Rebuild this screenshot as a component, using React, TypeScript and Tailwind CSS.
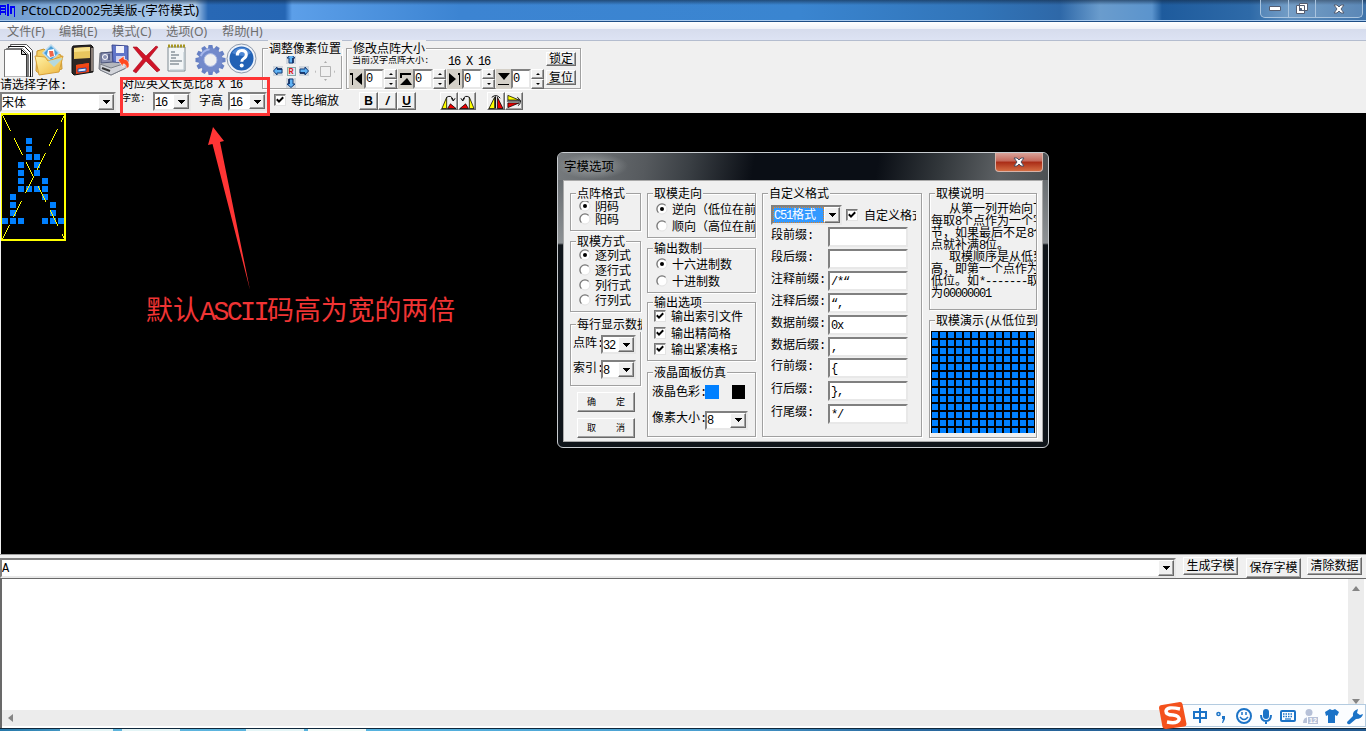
import React from "react";

/** Splits a string so that Latin runs get half-width cells and CJK runs full-width ones. */
function T({ s, className = "" }: { s: string; className?: string }) {
  const parts = s.split(/([\x20-\x7e“”]+)/).filter(Boolean);
  return (
    <span className={"whitespace-pre " + className}>
      {parts.map((p, i) =>
        /^[\x20-\x7e“”]/.test(p) ? (
          <span key={i} className="font-['Liberation_Mono','Noto_Sans_CJK_SC',monospace] tracking-[-0.1em]">{p}</span>
        ) : (
          <span key={i}>{p}</span>
        )
      )}
    </span>
  );
}

function Group({ title, className, children }: { title: string; className: string; children?: React.ReactNode }) {
  return (
    <div className={"relative shrink-0 border border-[#a0a0a0] shadow-[1px_1px_0_#fff,inset_1px_1px_0_#fff] " + className}>
      <div className="absolute left-[5px] right-[-2px] top-[-9px] flex h-[16px] overflow-hidden leading-[16px]">
        <T s={title} className="bg-[#f0f0f0] px-px" />
      </div>
      {children}
    </div>
  );
}

function Arrow() {
  return (
    <svg width="7" height="4" viewBox="0 0 7 4" shapeRendering="crispEdges">
      <path d="M0 0h7v1H6v1H5v1H4v1H3V3H2V2H1V1H0z" fill="#000" />
    </svg>
  );
}

const sunken = "border-2 border-t-[#808080] border-l-[#808080] border-b-[#e8e8e8] border-r-[#e8e8e8] bg-white";
const raised =
  "border border-t-white border-l-white border-b-[#696969] border-r-[#696969] shadow-[inset_-1px_-1px_0_#a0a0a0] bg-[#f0f0f0]";

function Combo({ value, className, selected }: { value: string; className: string; selected?: boolean }) {
  return (
    <div className={"flex shrink-0 items-stretch " + sunken + " " + className}>
      <div className="flex min-w-0 flex-1 items-center overflow-hidden">
        {selected ? (
          <span className="flex h-[16px] w-full items-center border border-dotted border-[#e08020] bg-[#3399ff] text-white">
            <T s={value} />
          </span>
        ) : (
          <T s={value} />
        )}
      </div>
      <div className={"flex w-[16px] shrink-0 items-center justify-center " + raised}>
        <Arrow />
      </div>
    </div>
  );
}

function Radio({ label, on, className = "" }: { label: string; on?: boolean; className?: string }) {
  return (
    <div className={"flex shrink-0 items-center overflow-hidden " + className}>
      <svg width="12" height="12" viewBox="0 0 12 12" className="shrink-0">
        <circle cx="6" cy="6" r="5" fill="#fff" stroke="#e3e3e3" />
        <path d="M2.4 9.6A5 5 0 0 1 9.6 2.4" fill="none" stroke="#777" strokeWidth="1.3" />
        {on && <circle cx="6" cy="6" r="2" fill="#000" />}
      </svg>
      <T s={label} className="ml-[4px]" />
    </div>
  );
}

function Check({ label, className = "", gap = "ml-[5px]" }: { label: string; className?: string; gap?: string }) {
  return (
    <div className={"flex shrink-0 items-center overflow-hidden " + className}>
      <div className="flex h-[12px] w-[12px] shrink-0 items-center justify-center border border-b-[#e3e3e3] border-l-[#777] border-r-[#e3e3e3] border-t-[#777] bg-white shadow-[inset_1px_1px_0_#999]">
        <svg width="8" height="8" viewBox="0 0 8 8">
          <path d="M.8 3.3L3 5.6 7.2 1.3" fill="none" stroke="#000" strokeWidth="2" />
        </svg>
      </div>
      <T s={label} className={gap} />
    </div>
  );
}

function Spin() {
  return (
    <div className="flex w-[13px] flex-col">
      <div className={"flex h-[10px] items-center justify-center " + raised}>
        <svg width="4" height="2" viewBox="0 0 4 2"><path d="M0 2L2 0l2 2z" /></svg>
      </div>
      <div className={"flex h-[10px] items-center justify-center " + raised}>
        <svg width="4" height="2" viewBox="0 0 4 2"><path d="M0 0l2 2 2-2z" /></svg>
      </div>
    </div>
  );
}

function Spinner({ icon, className = "" }: { icon: string; className?: string }) {
  return (
    <div className={"flex h-[20px] shrink-0 " + className}>
      <div className="flex w-[15px] items-center justify-center bg-[#d4d0c8]">
        <svg width="15" height="18" viewBox="0 0 15 18"><path d={icon} fill="#000" /></svg>
      </div>
      <div className={"flex w-[20px] items-center " + sunken}><T s="0" className="mt-[-2px]" /></div>
      <Spin />
    </div>
  );
}

function Btn({ label, className }: { label: string; className: string }) {
  return (
    <div className={"flex shrink-0 items-center justify-center " + raised + " " + className}>
      <T s={label} className="mt-[-2px]" />
    </div>
  );
}

/* ---------- toolbar icons ---------- */
function IconNew() {
  return (
    <svg width="31" height="34" viewBox="0 0 31 34">
      <path d="M6.500 1.500h16l6 6V34h-16z" fill="#fff" stroke="#555" />
      <path d="M4.500 3.500h16l6 6V34h-16z" fill="#fff" stroke="#111" />
      <path d="M2.500 5.500h16l6 6V34h-16z" fill="#fff" stroke="#777" />
      <path d="M.5 6.500h17l5 5V34H.5z" fill="#fff" stroke="#777" />
      <path d="M17.500 6.500v5h5z" fill="#ccc" stroke="#000" />
      <path d="M23 11v23M26.500 10v24" stroke="#000" />
    </svg>
  );
}
function IconOpen() {
  return (
    <svg width="31" height="32" viewBox="0 0 31 32">
      <defs><linearGradient id="fo" x2="1" y2="1"><stop stopColor="#fff3a8" /><stop offset="1" stopColor="#eeb53c" /></linearGradient></defs>
      <path d="M3 7l7-2 3 3 14 3 1 14-22 5-4-3z" fill="#f5cf62" stroke="#c9942c" />
      <path d="M17 1l8 8-8 8-8-8z" fill="#4a9fd8" stroke="#b9d9ee" strokeWidth="1.500" />
      <path d="M14 6l6-1 1 7-5 2-3-3z" fill="#fff" /><path d="M15 7l4 0 1 5-4 1z" fill="#ef654b" />
      <path d="M1 12l10 1 3 4 15-5-4 16-20 3z" fill="url(#fo)" stroke="#d7a039" />
      <path d="M14 17l15-3-9 9z" fill="#b4d9df" />
    </svg>
  );
}
function IconFloppy() {
  return (
    <svg width="25" height="32" viewBox="0 0 25 32">
      <path d="M3 2l18-1 2 2v25l-19 3-2-2V4z" fill="#2d2725" stroke="#111" />
      <path d="M4 4l16-1v11L4 15z" fill="#e8c65f" /><path d="M4 4l16-1v4L4 8z" fill="#f7e08a" />
      <path d="M6 21l13-2v9L6 30z" fill="#ed3f19" /><path d="M6 21l13-2v3L6 24z" fill="#f24a16" />
      <path d="M8 25l8-1v3l-8 1z" fill="#dce9ff" stroke="#234fa0" /><path d="M22 4v23" stroke="#8a7f78" strokeWidth="2" />
    </svg>
  );
}
function IconSaveAll() {
  return (
    <svg width="32" height="32" viewBox="0 0 32 32">
      <path d="M2 9l14-1 13 3-1 13-15 7L1 25z" fill="#b4b7bd" stroke="#71767f" />
      <path d="M3 9l12-1v10L3 19z" fill="#8c93b4" stroke="#4b5478" /><circle cx="7" cy="13" r="2.500" fill="none" stroke="#fff" /><path d="M11 10v6" stroke="#26315e" />
      <path d="M14 1l16 1v17l-15-1z" fill="#6075c9" stroke="#3b488f" /><path d="M18 2h8v7h-8z" fill="#f2f2fa" /><path d="M18 12h9v6h-9z" fill="#c8cff2" />
      <path d="M2 20l11 4 15-5v5l-15 7L2 26z" fill="#d2d4da" stroke="#787d86" /><path d="M4 24l8 3" stroke="#333" strokeWidth="2" />
      <path d="M20 16l6-4v3q6 1 5 8l-3 2q1-5-3-5v3z" fill="#ff481e" stroke="#fff" strokeWidth=".6" />
    </svg>
  );
}
function IconDelete() {
  return (
    <svg width="29" height="29" viewBox="0 0 29 29">
      <path d="M1 2l4 0 9 9L24 1l2 1-9 11 11 12-3 2-11-11L4 28l-3-2 10-12z" fill="#cf1428" stroke="#a50d1d" strokeWidth=".6" />
    </svg>
  );
}
function IconNote() {
  return (
    <svg width="21" height="29" viewBox="0 0 21 29">
      <path d="M2 3h17v24H2z" fill="#f3f6f7" stroke="#7e8a92" />
      <path d="M2 2h17" stroke="#a69520" strokeWidth="3" strokeDasharray="2 1" />
      <path d="M5 8h4M5 11h8M5 14h5M4 17h12M4 20h9" stroke="#566571" strokeWidth="1.200" />
      <path d="M18 8v18H4" stroke="#b9c7ce" fill="none" />
    </svg>
  );
}
const teeth = [0, 30, 60, 90, 120, 150, 180, 210, 240, 270, 300, 330];
function IconGear() {
  return (
    <svg width="31" height="32" viewBox="-16 -16 32 32">
      <g fill="#6680c4">{teeth.map((a) => <path key={a} d="M-3-10l1-5.500h4l1 5.500z" transform={`rotate(${a})`} />)}</g>
      <circle r="9.500" fill="none" stroke="#738acb" strokeWidth="6" /><circle r="6.600" fill="#f0f0f0" stroke="#a8b7e2" />
      <path d="M-10-4a11 11 0 0 1 9-7" fill="none" stroke="#a6b7ec" strokeWidth="2" />
    </svg>
  );
}
function IconHelp() {
  return (
    <svg width="31" height="31" viewBox="0 0 31 31">
      <circle cx="15.500" cy="15.500" r="14.500" fill="#eef3fb" stroke="#8d98a9" /><circle cx="15.500" cy="15.500" r="12" fill="#2161b5" />
      <path d="M6 10a11 11 0 0 1 19 0q-7 6-19 0" fill="#4d87d4" />
      <path d="M11.300 12.500q0-5 4.500-5 4.500 0 4.500 4 0 2.500-2.500 4-2 1.200-2 3.200" fill="none" stroke="#fff" strokeWidth="3" /><circle cx="15.700" cy="22.500" r="2" fill="#fff" />
    </svg>
  );
}

function MoveArrow({ r, className = "" }: { r: number; className?: string }) {
  return (
    <svg width="10" height="10" viewBox="0 0 10 10" className={"bg-[#d0d6dd] " + className}>
      <g transform={`rotate(${r} 5 5)`}><path d="M5 .5L9 4H7v5H3V4H1z" fill="#5fb2f4" stroke="#173e78" /><path d="M7 4v5" stroke="#0b265b" strokeWidth="1.500" /></g>
    </svg>
  );
}

/* ---------- canvas glyph ---------- */
const rows: number[][] = [[], [], [], [3], [3], [3, 4], [2, 4], [2, 4], [2, 5], [2, 3, 4, 5], [1, 5], [1, 6], [1, 6], [0, 1, 2, 5, 6, 7]];

function Glyph() {
  return (
    <svg width="66" height="130" viewBox="0 0 66 130" shapeRendering="crispEdges">
      {rows.flatMap((cols, r) => cols.map((c) => <rect key={`${r}-${c}`} x={1 + c * 8} y={1 + r * 8} width="6" height="6" fill="#0080ff" />))}
      <rect x="0" y="1" width="64" height="126" fill="none" stroke="#ff0" strokeWidth="2" />
      <path d="M1 1L64 127" stroke="#ff0" strokeDasharray="18.6 8.2" />
      <path d="M1 127L64 1" stroke="#ff0" strokeDasharray="18.6 8.2" strokeDashoffset="1.500" />
    </svg>
  );
}

const fields: [string, string, string][] = [
  ["段前缀:", "", "mt-0"],
  ["段后缀:", "", "mt-[2px]"],
  ["注释前缀:", "/*“", "mt-[2px]"],
  ["注释后缀:", "“,", "mt-[2px]"],
  ["数据前缀:", "0x", "mt-[2px]"],
  ["数据后缀:", ",", "mt-[2px]"],
  ["行前缀:", "{", "mt-px"],
  ["行后缀:", "},", "mt-[3px]"],
  ["行尾缀:", "*/", "mt-[3px]"],
];

const notes = [
  "   从第一列开始向下",
  "每取8个点作为一个字",
  "节，如果最后不足8个",
  "点就补满8位。",
  "   取模顺序是从低到",
  "高，即第一个点作为",
  "低位。如*-------取",
  "为00000001",
];

function OptionsDialog() {
  return (
    <div className="absolute left-[557px] top-[152px] flex h-[296px] w-[492px] flex-col rounded-[6px] border border-[#c8ccd0] bg-[linear-gradient(#5b6064_0,#8d9194_90px,#10151a_92px,#10151a_100%)]">
      <div className="flex h-[27px] shrink-0 justify-between rounded-t-[5px] bg-[linear-gradient(100deg,#777b7e_0%,#565a5e_18%,#3a3f44_27%,#0a0e15_40%,#0a0e15_65%,#33383c_78%,#5d6164_90%,#4c5053_100%)]">
        <div className="flex h-[26px] w-[70px] items-center bg-[radial-gradient(closest-side,rgba(190,195,195,0.65),transparent)] pl-[6px] font-['Noto_Sans_CJK_SC',sans-serif] text-[12.5px]">
          字模选项
        </div>
        <div className="mr-[5px] flex h-[19px] w-[48px] items-center justify-center rounded-b-[4px] border border-t-0 border-[#d8b3a8] bg-[linear-gradient(#d8a299_0,#c4685a_45%,#a92b16_50%,#d36c42_100%)]">
          <svg width="12" height="10" viewBox="0 0 12 10"><path d="M1 1h3l2 2 2-2h3L8 5l3 4H8L6 7 4 9H1l3-4z" fill="#fff" stroke="#4a4f62" /></svg>
        </div>
      </div>
      <div className="mx-[5px] flex h-[262px] shrink-0 overflow-hidden border border-[#aaa] bg-[#f0f0f0]">
        {/* matrix column */}
        <div className="ml-[6px] flex w-[71px] shrink-0 flex-col pt-[12px]">
          <Group title="点阵格式" className="h-[38px] pl-[8px] pt-[5px]">
            <Radio label="阴码" on className="h-[13px]" />
            <Radio label="阳码" className="h-[14px]" />
          </Group>
          <Group title="取模方式" className="mt-[10px] h-[71px] pl-[8px] pt-[5px]">
            <Radio label="逐列式" on className="h-[15px]" />
            <Radio label="逐行式" className="h-[15px]" />
            <Radio label="列行式" className="h-[15px]" />
            <Radio label="行列式" className="h-[15px]" />
          </Group>
          <Group title="每行显示数据" className="mt-[12px] h-[62px] pl-[2px] pt-[10px]">
            <div className="flex h-[19px] items-center"><T s="点阵:" className="mt-[-3px] w-[28px]" /><Combo value="32" className="h-[19px] w-[35px]" /></div>
            <div className="mt-[6px] flex h-[19px] items-center"><T s="索引:" className="mt-[-3px] w-[28px]" /><Combo value="8" className="h-[19px] w-[35px]" /></div>
          </Group>
          <div className={"ml-[7px] mt-[6px] flex h-[20px] w-[58px] items-center justify-between px-[9px] text-[9px] " + raised}><span>确</span><span>定</span></div>
          <div className={"ml-[7px] mt-[6px] flex h-[20px] w-[58px] items-center justify-between px-[9px] text-[9px] " + raised}><span>取</span><span>消</span></div>
        </div>
        {/* output column */}
        <div className="ml-[6px] flex w-[109px] shrink-0 flex-col pt-[12px]">
          <Group title="取模走向" className="h-[45px] pl-[8px] pt-[6px]">
            <Radio label="逆向（低位在前）" on className="h-[17px]" />
            <Radio label="顺向（高位在前）" className="h-[17px]" />
          </Group>
          <Group title="输出数制" className="mt-[10px] h-[45px] pl-[8px] pt-[6px]">
            <Radio label="十六进制数" on className="h-[17px]" />
            <Radio label="十进制数" className="h-[17px]" />
          </Group>
          <Group title="输出选项" className="mt-[9px] h-[59px] pl-[6px] pt-[5px]">
            <Check label="输出索引文件" className="h-[16px]" />
            <Check label="输出精简格" className="h-[17px]" />
            <Check label="输出紧凑格式" className="h-[16px] w-[83px]" />
          </Group>
          <Group title="液晶面板仿真" className="mt-[11px] h-[65px] pl-[4px] pt-[11px]">
            <div className="flex h-[15px] items-center">
              <T s="液晶色彩:" className="w-[53px]" /><div className="h-[14px] w-[14px] bg-[#0080ff]" /><div className="ml-[13px] h-[14px] w-[13px] bg-black" />
            </div>
            <div className="mt-[11px] flex h-[20px] items-center"><T s="像素大小:" className="mt-[-5px] w-[53px]" /><Combo value="8" className="h-[19px] w-[43px]" /></div>
          </Group>
        </div>
        {/* custom format column */}
        <div className="ml-[6px] flex w-[160px] shrink-0 flex-col pt-[12px]">
          <Group title="自定义格式" className="h-[244px] pl-[8px] pt-[11px]">
            <div className="flex h-[20px] items-center">
              <Combo value="C51格式" selected className="h-[20px] w-[71px]" />
              <Check label="自定义格式" gap="ml-[6px]" className="ml-[4px] h-[16px] w-[70px]" />
            </div>
            <div className="mt-[2px] flex flex-col">
              {fields.map(([label, value, gap]) => (
                <div key={label} className={"flex h-[20px] items-center " + gap}>
                  <T s={label} className="mt-[-5px] w-[57px] pl-0" />
                  <div className={"flex h-[20px] w-[80px] items-center " + sunken}><T s={value} className="pl-px" /></div>
                </div>
              ))}
            </div>
          </Group>
        </div>
        {/* description column */}
        <div className="ml-[7px] flex w-[108px] shrink-0 flex-col pt-[12px]">
          <Group title="取模说明" className="h-[117px] pt-[8px]">
            <div className="flex flex-col overflow-hidden pl-px">
              {notes.map((n) => <T key={n} s={n} className="h-[12px] leading-[12px]" />)}
            </div>
          </Group>
          <Group title="取模演示(从低位到高)" className="mt-[10px] h-[118px] pl-px pt-[10px]">
            <svg width="104" height="102" viewBox="0 0 104 102" shapeRendering="crispEdges">
              <defs><pattern id="px" width="8" height="8" patternUnits="userSpaceOnUse"><path d="M0 0h8v8H0z" /><path d="M1 1h6v6H1z" fill="#0080ff" /></pattern></defs>
              <path d="M0 0h104v102H0z" fill="url(#px)" />
            </svg>
          </Group>
        </div>
      </div>
    </div>
  );
}

function ImeBar() {
  return (
    <div className="absolute left-[1158px] top-[701px] flex h-[29px] w-[208px] items-center">
      <div className="absolute inset-y-[3px] left-[14px] right-0 border border-[#b3cbe0] bg-[#fbfdff]" />
      <svg width="208" height="29" viewBox="0 0 208 29" className="relative">
        <path d="M4 4l18-3q2 0 2.500 2l4 20q0 2-2 2.500L8 28q-3 0-3.500-2L1 7q0-3 3-3z" fill="#f4511c" />
        <path d="M22 8q-13-3-14 2 0 4 7 4 7 1 6 5-2 4-12 2" fill="none" stroke="#fff" strokeWidth="3.500" />
        <g fill="none" stroke="#1b73c7" strokeWidth="2">
          <path d="M36 11h12v6H36zM42 7v15" />
          <circle cx="60.500" cy="13" r="1.600" strokeWidth="1.500" />
          <circle cx="86" cy="15" r="7" /><path d="M82 16q4 5 8 0" strokeWidth="1.500" /><path d="M84 11v3M88 11v3" strokeWidth="1.500" />
          <path d="M103 14q0 6 5 6t5-6M108 19v4" />
          <rect x="123" y="10" width="14" height="10" rx="1" />
          <path d="M125 13h10M125 15.500h10" strokeWidth="1.500" strokeDasharray="1.500 1" /><path d="M127 18h6" strokeWidth="1.200" />
        </g>
        <path d="M64 15h3v3l-2 4h-1l1-4h-1z" fill="#1b73c7" /><rect x="105" y="8" width="6" height="10" rx="3" fill="#1b73c7" />
        <circle cx="151" cy="11.500" r="3.500" fill="#b6c1d8" /><path d="M145 22q0-6 6-6h3v6z" fill="#b6c1d8" />
        <path d="M149.500 15.500h11v8h-11z" fill="#b6c1d8" stroke="#fbfdff" />
        <text x="151" y="22" fontSize="7" fontWeight="700" fill="#fff" fontFamily="Liberation Sans, sans-serif">12</text>
        <path d="M167 11l5-3q2 2 5 0l4 3-2 4-2-1v8h-7v-8l-2 1z" fill="#1b73c7" />
        <path d="M189 21l6-6q-1-5 5-7l-1 4 3 2 3-1q-1 5-7 5l-6 5q-3 1-3-2z" fill="#1b73c7" />
      </svg>
    </div>
  );
}

const tri: [string, string, string][] = [
  ["M1 16h5V4z", "M7 16h9l-6-5z", "M6 4q5-3 7 3M11 5l2 3 2-3"],
  ["M16 16h-5V4z", "M10 16H1l6-5z", "M11 4q-5-3-7 3M2 5l2 3 2-3"],
  ["M1 16h6V4z", "M10 16h6L10 4z", "M4 4q5-4 9 1M8 3v13"],
  ["M2 2v5h12z", "M2 15v-5h12z", "M12 4q6 4 1 9M1 8h15"],
];

export default function App() {
  return (
    <div className="relative flex h-[731px] w-[1366px] flex-col overflow-hidden bg-[#f0f0f0] font-['Noto_Sans_CJK_SC',sans-serif] text-[12px] leading-[14px] text-black">
      {/* title bar */}
      <div className="flex h-[22px] shrink-0 justify-between border-b border-[#1d4d85] bg-[linear-gradient(rgba(20,45,75,0.65)_0,transparent_5px),linear-gradient(90deg,#6e9bd0_0,#8fb5de_100px,#b4d0ee_195px,#2868b5_208px,#2566b4_285px,#5c9fe9_292px,#3c84d2_460px,#3a85d0_800px,#3174b8_980px,#2e68a8_1060px,#6a9ccd_1100px,#5b94cd_1152px,#1e5b9d_1162px,#2e6aa8_1250px,#5c8dbd_1290px,#3f73aa_1366px)] shadow-[inset_0_-1px_0_#a7c9ed]">
        <div className="flex items-center">
          <svg width="16" height="14" viewBox="0 0 16 14" shapeRendering="crispEdges"><path d="M0 1h6v10H5V9H1v2H0zM1 3v1h4V3zM1 6v1h4V6zM7 0h2v12H7zM10 2h5v11h-1V4h-2v6h-2z" fill="#0000f5" /></svg>
          <span className="ml-[5px] w-[186px] whitespace-nowrap font-['Noto_Sans','Noto_Sans_CJK_SC',sans-serif] text-[12.500px] tracking-[-0.03px]">PCtoLCD2002完美版-(字符模式)</span>
        </div>
        <div className="mr-[3px] flex h-[18px] w-[103px] rounded-b-[5px] border border-t-0 border-[#a9c4df] bg-[#ffffff25]">
          <div className="flex w-[28px] items-center justify-center border-r border-[#a9c4df]">
            <svg width="12" height="5" viewBox="0 0 12 5"><path d="M.5.5h11v4H.5z" fill="#fff" stroke="#555d70" /></svg>
          </div>
          <div className="flex w-[27px] items-center justify-center border-r border-[#a9c4df]">
            <svg width="12" height="11" viewBox="0 0 12 11"><path d="M3.500.5h8v7h-8zM.5 2.500h8v8h-8z" fill="#fff" stroke="#555d70" /><path d="M3.500 5.500h2v2h-2z" fill="#3569a0" stroke="#555d70" /></svg>
          </div>
          <div className="flex flex-1 items-center justify-center">
            <svg width="12" height="10" viewBox="0 0 12 10"><path d="M1 1h3l2 2 2-2h3L8 5l3 4H8L6 7 4 9H1l3-4z" fill="#fff" stroke="#555d70" /></svg>
          </div>
        </div>
      </div>
      {/* menu bar */}
      <div className="flex h-[19px] shrink-0 items-center border-b border-[#b4bdcf] bg-[linear-gradient(#fff_0,#eef1f7_7px,#d6dced_7px,#dde3f3_100%)] pl-[7px] pt-px font-['Noto_Sans','Noto_Sans_CJK_SC',sans-serif] text-[12.200px] text-[#6d6d6d]">
        <span className="w-[52px]">文件(F)</span>
        <span className="w-[53px]">编辑(E)</span>
        <span className="w-[54px]">模式(C)</span>
        <span className="w-[56px]">选项(O)</span>
        <span>帮助(H)</span>
      </div>
      {/* toolbar */}
      <div className="flex h-[72px] shrink-0">
        <div className="flex w-[262px] shrink-0 flex-col">
          <div className="flex h-[35px] items-center pl-[4px] pt-[2px]">
            <IconNew />
            <div className="ml-[-1px]"><IconOpen /></div>
            <div className="ml-[5px]"><IconFloppy /></div>
            <div className="ml-[3px]"><IconSaveAll /></div>
            <div className="ml-[2px]"><IconDelete /></div>
            <div className="mb-[3px] ml-[5px]"><IconNote /></div>
            <div className="ml-[8px]"><IconGear /></div>
            <div className="mb-[3px]"><IconHelp /></div>
          </div>
          <div className="flex h-[37px] w-[270px]">
            <div className="flex w-[116px] flex-col">
              <div className="flex h-[16px] items-center pt-[2px]"><T s="请选择字体:" /></div>
              <Combo value="宋体" className="h-[20px] w-[116px]" />
            </div>
            <div className="ml-[6px] flex w-[148px] flex-col">
              <div className="flex h-[13px] items-center overflow-hidden pt-[3px]"><T s="对应英文长宽比8 X 16" /></div>
              <div className="mt-[3px] flex h-[19px] items-center">
                <T s="字宽:" className="mt-[-6px] w-[31px] text-[9px]" />
                <Combo value="16" className="h-[19px] w-[38px]" />
                <T s="字高" className="ml-[8px] mt-[-3px] w-[29px]" />
                <Combo value="16" className="h-[19px] w-[39px]" />
              </div>
            </div>
          </div>
        </div>
        <div className="flex w-[80px] shrink-0 flex-col pt-[7px]">
          <Group title="调整像素位置" className="h-[41px] pl-[10px] pt-[5px]">
            <div className="flex items-center">
              <div className="grid w-[36px] grid-cols-3 grid-rows-3 items-center justify-items-center gap-x-[3px] gap-y-[2px]">
                <span /><MoveArrow r={0} /><span />
                <MoveArrow r={270} />
                <span className="flex h-[9px] w-[9px] items-center justify-center border border-[#8aa] bg-[#dce9f3] text-[8px] font-bold leading-none text-[#d22]">R</span>
                <MoveArrow r={90} />
                <span /><MoveArrow r={180} /><span />
              </div>
              <svg width="20" height="20" viewBox="0 0 20 20" className="ml-[6px]"><path d="M5.500 5.500h10v10h-10z" fill="none" stroke="#b5b5b5" /><path d="M9 2l1.500-2L12 2zM9 18l1.500 2 1.500-2zM1 9v3l-1-1zM19 9v3l1-1z" fill="#aaa" /></svg>
            </div>
          </Group>
          <Check label="等比缩放" className="ml-[12px] mt-[2px] h-[17px]" gap="ml-[5px]" />
        </div>
        <div className="ml-[4px] flex w-[235px] shrink-0 flex-col pt-[7px]">
          <Group title="修改点阵大小" className="flex h-[41px]">
            <div className="flex w-[199px] flex-col">
              <div className="flex h-[16px] items-center pl-[5px] pt-[7px]">
                <T s="当前汉字点阵大小:" className="w-[96px] text-[9px]" /><T s="16 X 16" />
              </div>
              <div className="mt-[4px] flex gap-x-[1px] pl-[2px]">
                <Spinner icon="M1 3h3v12H3V5H1zM13 3v12L6 9z" />
                <Spinner icon="M2 3h11v2H4v3H2zM2 15h12L9 8z" />
                <Spinner icon="M2 3v12l7-6zM11 3h2v12h-1V5h-1z" />
                <Spinner icon="M2 3h12L8 10zM2 14h11v1H2z" />
              </div>
            </div>
            <div className="flex flex-col pt-[3px]">
              <Btn label="锁定" className="h-[14px] w-[30px]" />
              <Btn label="复位" className="mt-[4px] h-[15px] w-[30px]" />
            </div>
          </Group>
          <div className="mt-[3px] flex pl-[13px] font-['Liberation_Sans',sans-serif] text-[12px] font-bold">
            <div className={"flex h-[18px] w-[19px] items-center justify-center " + raised}>B</div>
            <div className={"flex h-[18px] w-[19px] items-center justify-center italic " + raised}>/</div>
            <div className={"flex h-[18px] w-[19px] items-center justify-center underline " + raised}>U</div>
            <div className="ml-[24px] flex">
              {tri.map(([a, b, c], i) => (
                <div key={i} className={"flex h-[18px] w-[18px] items-center justify-center " + raised + (i === 2 ? " ml-[11px]" : "")}>
                  <svg width="17" height="17" viewBox="0 0 17 17"><path d={a} fill="#ff0" stroke="#000" strokeWidth=".8" /><path d={b} fill="#e00" stroke="#000" strokeWidth=".8" /><path d={c} fill="none" stroke="#000" /></svg>
                </div>
              ))}
            </div>
          </div>
        </div>
      </div>
      {/* drawing canvas */}
      <div className="ml-px h-[441px] shrink-0 bg-black"><Glyph /></div>
      {/* input row */}
      <div className="flex h-[24px] shrink-0 border-t border-[#a0a0a0] pt-[3px]">
        <Combo value="A" className="h-[20px] w-[1176px]" />
        <Btn label="生成字模" className="ml-[7px] mt-[-1px] h-[18px] w-[55px]" />
        <Btn label="保存字模" className="ml-[8px] h-[20px] w-[55px]" />
        <Btn label="清除数据" className="ml-[6px] mt-[-1px] h-[18px] w-[55px]" />
      </div>
      {/* output area */}
      <div className="flex h-[150px] shrink-0 flex-col border-l-2 border-t border-[#696969] bg-white">
        <div className="flex h-[131px] shrink-0 justify-end pr-[2px]">
          <div className="flex w-[16px] flex-col items-center justify-between bg-[#ececec] pb-[6px] pt-[7px]">
            <svg width="8" height="5" viewBox="0 0 8 5"><path d="M0 5l4-5 4 5z" fill="#858585" /></svg>
            <svg width="8" height="5" viewBox="0 0 8 5"><path d="M0 0l4 5 4-5z" fill="#858585" /></svg>
          </div>
        </div>
        <div className="flex h-[16px] items-center bg-[#ececec] pl-[6px]">
          <svg width="5" height="8" viewBox="0 0 5 8"><path d="M5 0L0 4l5 4z" fill="#858585" /></svg>
        </div>
      </div>
      {/* task bar edge */}
      <div className="flex h-[3px] shrink-0 border-t border-[#10283c] bg-[linear-gradient(90deg,#2577a8_0,#5fb6de_120px,#55b2df_400px,#4a9fd0_700px,#2a6aa0_900px,#235a90_1366px)]">
        <div className="ml-[60px] h-[2px] w-[53px] bg-[#e4f5f6]" />
        <div className="ml-[9px] h-[2px] w-[58px] bg-[#e4f5f6]" />
        <div className="ml-[66px] h-[2px] w-[58px] bg-[#e4f5f6]" />
        <div className="ml-[4px] h-[2px] w-[58px] bg-[#f2fbf8]" />
      </div>

      <OptionsDialog />

      {/* annotation */}
      <div className="absolute left-[120px] top-[77px] h-[39px] w-[150px] border-[3px] border-[#ff3535]" />
      <svg width="50" height="170" viewBox="0 0 50 170" className="absolute left-[205px] top-[125px]"><path d="M8 2l11 14-4 1L45 165 7.500 19 3 20z" fill="#ff3535" /></svg>
      <div className="absolute left-[146px] top-[291px] text-[26.900px] leading-[36px] text-[#f03434]"><T s="默认ASCII码高为宽的两倍" /></div>

      <ImeBar />
    </div>
  );
}
